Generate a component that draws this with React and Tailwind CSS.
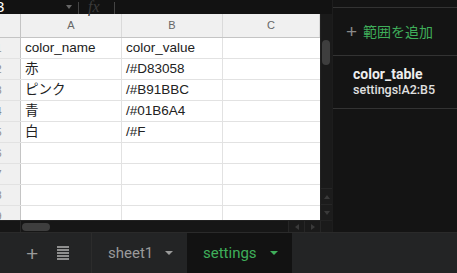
const cols = [
  { label: "A", w: "w-[101px]" },
  { label: "B", w: "w-[101px]" },
  { label: "C", w: "w-[97px]" },
];

const rows = [
  ["color_name", "color_value"],
  ["赤", "/#D83058"],
  ["ピンク", "/#B91BBC"],
  ["青", "/#01B6A4"],
  ["白", "/#F"],
  ["", ""],
  ["", ""],
  ["", ""],
  ["", ""],
];

const font = { fontFamily: '"Liberation Sans", Arial, "Noto Sans CJK JP", sans-serif' };
const roboto = { fontFamily: 'Roboto, "Liberation Sans", sans-serif' };

const Grid = () => (
  <div className="w-[320px] h-[206px] overflow-hidden bg-white">
    <div className="flex h-[24px] bg-[#f0f0f0] border-b border-[#c4c4c4]">
      <div className="w-[21px] shrink-0 border-r border-[#c4c4c4]" />
      {cols.map((c) => (
        <div
          key={c.label}
          className={`${c.w} shrink-0 border-r border-[#dadada] flex items-center justify-center text-[11px] text-[#666]`}
        >
          {c.label}
        </div>
      ))}
    </div>
    {rows.map((r, i) => (
      <div key={i} className="flex h-[21px] border-b border-[#e2e2e2]">
        <div className="w-[21px] shrink-0 overflow-hidden bg-[#f0f0f0] border-r border-[#c4c4c4] relative">
          <span className="absolute left-[-4px] top-[3px] text-[10px] text-[#888]">{i + 1}</span>
        </div>
        <div className="w-[101px] shrink-0 border-r border-[#e2e2e2] pl-[4px] flex items-center text-[13.5px] text-[#222] whitespace-nowrap">
          {r[0]}
        </div>
        <div className="w-[101px] shrink-0 border-r border-[#e2e2e2] pl-[4px] flex items-center text-[13.5px] text-[#222] whitespace-nowrap">
          {r[1]}
        </div>
        <div className="w-[97px] shrink-0" />
      </div>
    ))}
  </div>
);

const Arrow = ({ d }) => (
  <svg width="6" height="6" viewBox="0 0 6 6">
    <path d={d} fill="#3a3a3a" />
  </svg>
);

export default function App() {
  return (
    <div className="w-[457px] h-[273px] overflow-hidden flex flex-col bg-[#141414]" style={font}>
      <div className="flex h-[232px]">
        <div className="w-[332px] flex flex-col">
          <div className="h-[14px] bg-[#121212] relative">
            <span className="absolute left-[-4px] top-0 text-[15px] leading-[14px] text-white">3</span>
            <span className="absolute left-[66px] top-[5px]">
              <svg width="6" height="4" viewBox="0 0 6 4">
                <path d="M0 0h6L3 4z" fill="#666" />
              </svg>
            </span>
            <div className="absolute left-[78px] top-[2px] w-px h-[12px] bg-[#444]" />
            <span
              className="absolute left-[88px] top-0 text-[16px] leading-[14px] italic text-[#3a3a3a]"
              style={{ fontFamily: '"Liberation Serif", serif' }}
            >
              fx
            </span>
            <div className="absolute left-[114px] top-[2px] w-px h-[12px] bg-[#444]" />
          </div>
          <div className="flex">
            <Grid />
            <div className="w-[12px] h-[206px] bg-[#1a1a1a] flex flex-col border-l border-[#222]">
              <div className="flex-1 pt-[26px] px-[1px]">
                <div className="h-[25px] w-[8px] rounded-full bg-[#3e3e3e]" />
              </div>
              <div className="h-[16px] border-t border-[#262626] bg-[#1c1c1c] flex items-center justify-center">
                <Arrow d="M0 5L3 1L6 5z" />
              </div>
              <div className="h-[16px] border-t border-[#262626] bg-[#1c1c1c] flex items-center justify-center">
                <Arrow d="M0 1L3 5L6 1z" />
              </div>
            </div>
          </div>
          <div className="h-[12px] flex bg-[#161616] border-t border-[#222]">
            <div className="w-[21px] border-r border-[#262626]" />
            <div className="flex-1 flex items-center pl-[1px]">
              <div className="w-[28px] h-[8px] rounded-full bg-[#3e3e3e]" />
            </div>
            <div className="w-[16px] border-l border-[#262626] bg-[#1a1a1a] flex items-center justify-center">
              <Arrow d="M5 0L1 3L5 6z" />
            </div>
            <div className="w-[16px] border-l border-[#262626] bg-[#1a1a1a] flex items-center justify-center">
              <Arrow d="M1 0L5 3L1 6z" />
            </div>
            <div className="w-[12px] border-l border-[#262626] bg-[#1a1a1a]" />
          </div>
        </div>
        <div className="flex-1 flex flex-col bg-[#141414] border-l border-[#1d1d1d]">
          <div className="h-[8px] border-b border-[#333]" />
          <div className="h-[48px] border-b border-[#333] flex items-center pl-[13px] gap-[6px]">
            <span className="text-[19px] leading-none text-[#8a8a8a] font-light">+</span>
            <span className="text-[14px] text-[#3fae5a]" style={{ fontFamily: '"Noto Sans CJK JP", sans-serif' }}>
              範囲を追加
            </span>
          </div>
          <div className="h-[53px] border-b border-[#333] pl-[20px] pt-[10px] flex flex-col" style={roboto}>
            <span className="text-[14px] leading-[16px] font-bold text-[#eee]">color_table</span>
            <span className="text-[12.5px] leading-[16px] font-medium text-[#e0e0e0]">settings!A2:B5</span>
          </div>
        </div>
      </div>
      <div className="h-[41px] flex bg-[#232425] border-t border-[#2a2a2a]">
        <div className="w-[92px] flex items-center border-r border-[#2c2c2c]">
          <span className="ml-[26px] text-[21px] leading-none text-[#9a9a9a] font-light">+</span>
          <div className="ml-[19px] flex flex-col gap-[1px]">
            {[0, 1, 2, 3, 4].map((i) => (
              <div key={i} className="w-[12px] h-[2px] bg-[#8f8f8f]" />
            ))}
          </div>
        </div>
        <div className="w-[95px] flex items-center pl-[16px] gap-[12px]" style={roboto}>
          <span className="text-[15px] text-[#9a9a9a]">sheet1</span>
          <svg width="8" height="4" viewBox="0 0 8 4">
            <path d="M0 0h8L4 4z" fill="#9a9a9a" />
          </svg>
        </div>
        <div className="w-[105px] flex items-center pl-[16px] gap-[13px] bg-[#121212]" style={roboto}>
          <span className="text-[15px] text-[#3fae5a]">settings</span>
          <svg width="8" height="4" viewBox="0 0 8 4">
            <path d="M0 0h8L4 4z" fill="#3fae5a" />
          </svg>
        </div>
        <div className="flex-1" />
      </div>
    </div>
  );
}
